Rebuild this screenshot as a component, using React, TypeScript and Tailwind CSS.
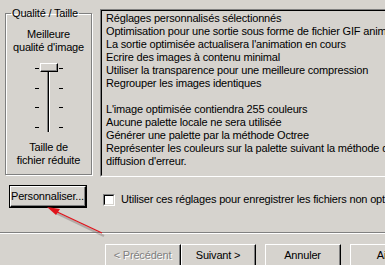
import React from 'react';

const lines1 = [
  'Réglages personnalisés sélectionnés',
  'Optimisation pour une sortie sous forme de fichier GIF animé',
  "La sortie optimisée actualisera l'animation en cours",
  'Ecrire des images à contenu minimal',
  'Utiliser la transparence pour une meilleure compression',
  'Regrouper les images identiques',
];

const lines2 = [
  "L'image optimisée contiendra 255 couleurs",
  'Aucune palette locale ne sera utilisée',
  'Générer une palette par la méthode Octree',
  'Représenter les couleurs sur la palette suivant la méthode de',
  "diffusion d'erreur.",
];

export default function App() {
  return (
    <div className="relative w-[385px] h-[265px] overflow-hidden bg-[#d6d3ce] text-[11px] leading-[13px] tracking-[-0.18px] text-black font-['Liberation_Sans',Arial,sans-serif]">
      <div className="flex h-[232px] pt-[6px]">
        <div className="w-[100px] shrink-0">
          <QualityGroup />
          <div className="mt-[10px] ml-[9px]">
            <ClassicButton label="Personnaliser..." width="w-[78px]" isDefault />
          </div>
        </div>
        <div className="flex-1 min-w-0">
          <div className="mt-[3px] w-[300px] h-[168px] border border-t-[#808080] border-l-[#808080] border-b-white border-r-white">
            <div className="h-full border border-t-black border-l-black border-b-[#d6d3ce] border-r-[#d6d3ce] pl-[4px] pt-[1px] whitespace-nowrap overflow-hidden">
              {lines1.map((l) => (
                <div key={l}>{l}</div>
              ))}
              <div className="h-[13px]" />
              {lines2.map((l) => (
                <div key={l}>{l}</div>
              ))}
            </div>
          </div>
          <label className="flex items-center mt-[16px] ml-[3px] whitespace-nowrap">
            <span className="w-[12px] h-[12px] shrink-0 border border-t-[#808080] border-l-[#808080] border-b-white border-r-white">
              <span className="block w-full h-full border border-t-black border-l-black border-b-[#d6d3ce] border-r-[#d6d3ce] bg-white" />
            </span>
            <span className="ml-[6px]">
              Utiliser ces réglages pour enregistrer les fichiers non optimisés
            </span>
          </label>
        </div>
      </div>

      <div className="border-t border-t-[#808080] border-b border-b-white" />

      <div className="flex mt-[10px] ml-[105px]">
        <ClassicButton label="< Précédent" width="w-[76px]" disabled />
        <ClassicButton label="Suivant >" width="w-[75px]" />
        <div className="ml-[9px] shrink-0">
          <ClassicButton label="Annuler" width="w-[76px]" />
        </div>
        <div className="ml-[9px] shrink-0">
          <ClassicButton label="Aide" width="w-[76px]" />
        </div>
      </div>

      {/* red arrow pointing at the button */}
      <svg
        className="absolute left-0 top-0 pointer-events-none"
        width="385"
        height="265"
        viewBox="0 0 385 265"
      >
        <line x1="56" y1="213" x2="104" y2="236" stroke="#7a6f6f" strokeOpacity="0.4" strokeWidth="2" />
        <line x1="53" y1="210" x2="102" y2="233" stroke="#e0141c" strokeWidth="1.3" />
        <polygon points="47,207 60,209 56,215" fill="#e0141c" />
      </svg>
    </div>
  );
}

function QualityGroup() {
  return (
    <fieldset className="ml-[5px] w-[87px] h-[169px] border border-[#808080] shadow-[inset_1px_1px_0_white,1px_1px_0_white] px-0">
      <legend className="ml-[5px] px-[1px] leading-[14px]">Qualité / Taille</legend>
      <div className="text-center mt-[8px]">
        <div>Meilleure</div>
        <div>qualité d'image</div>
      </div>
      <div className="relative mx-auto mt-[9px] w-[28px] h-[69px] flex justify-between">
        <div className="flex flex-col justify-between pt-[5px] pb-[4px]">
          {[0, 1, 2, 3].map((i) => (
            <div key={i} className="w-[4px] h-[1px] bg-black" />
          ))}
        </div>
        <div className="w-[3px] h-full border-l border-l-[#808080] bg-black border-r border-r-white" />
        <div className="flex flex-col justify-between pt-[5px] pb-[4px]">
          {[0, 1, 2, 3].map((i) => (
            <div key={i} className="w-[4px] h-[1px] bg-black" />
          ))}
        </div>
        <div className="absolute left-[5px] top-0 w-[18px] h-[9px] bg-[#d6d3ce] border border-t-white border-l-white border-r-black border-b-black shadow-[inset_-1px_-1px_0_#808080]" />
      </div>
      <div className="text-center mt-[9px]">
        <div>Taille de</div>
        <div>fichier réduite</div>
      </div>
    </fieldset>
  );
}

function ClassicButton({
  label,
  width,
  disabled,
  isDefault,
}: {
  label: string;
  width: string;
  disabled?: boolean;
  isDefault?: boolean;
}) {
  return (
    <div className={`${width} shrink-0 h-[23px] ${isDefault ? 'border border-black' : ''}`}>
      <div className="h-full border border-t-white border-l-white border-r-black border-b-black">
        <div className="h-full flex items-center justify-center border-r border-b border-r-[#808080] border-b-[#808080] whitespace-nowrap">
          <span className={disabled ? 'text-[#808080] [text-shadow:1px_1px_0_white]' : ''}>{label}</span>
        </div>
      </div>
    </div>
  );
}
